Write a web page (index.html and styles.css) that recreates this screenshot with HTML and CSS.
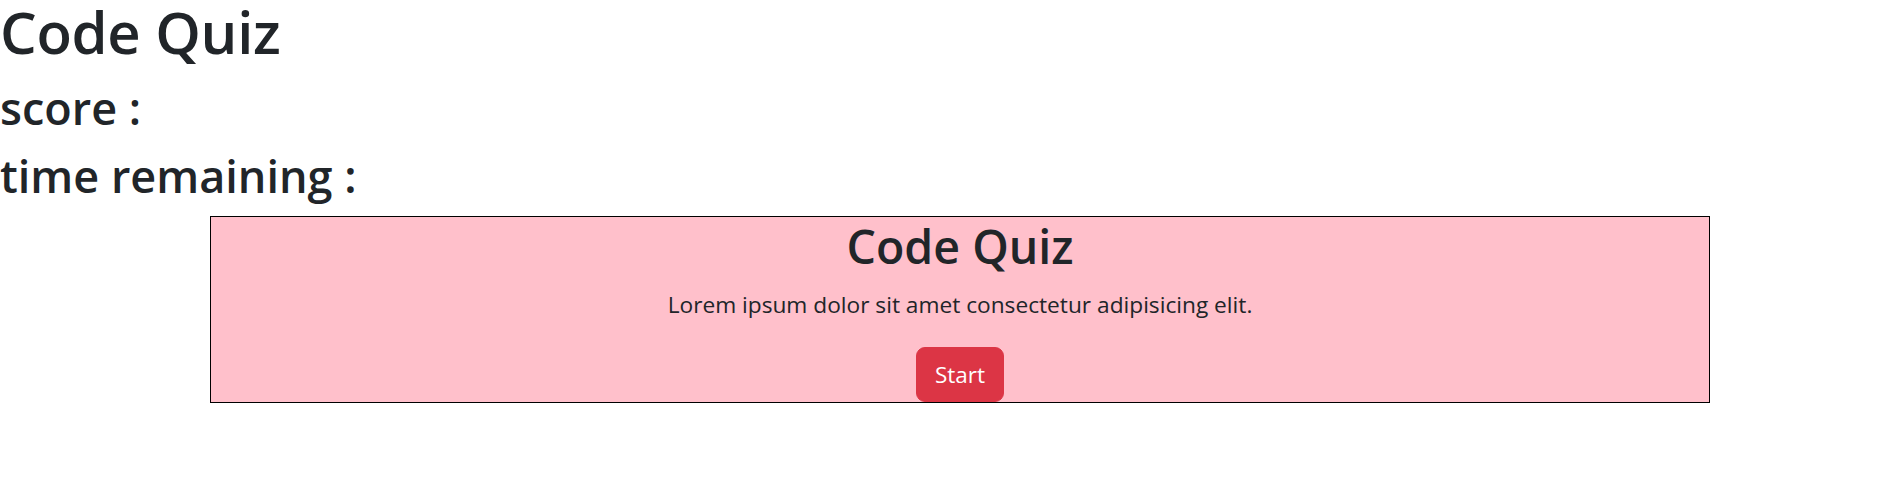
FILE: index.html
```html
<!DOCTYPE html>
<html lang="en">
<head>
<meta charset="utf-8">
<title>Code Quiz</title>
<link rel="stylesheet" href="styles.css">
</head>
<body>
<header class="top">
  <h1 class="title">Code Quiz</h1>
  <h2 class="stat">score :</h2>
  <h2 class="stat stat-last">time remaining :</h2>
</header>
<section class="quiz-box">
  <h2 class="quiz-title">Code Quiz</h2>
  <p class="quiz-text">Lorem ipsum dolor sit amet consectetur adipisicing elit.</p>
  <button class="btn-start" type="button">Start</button>
</section>
</body>
</html>
```

FILE: styles.css
```css
html, body {
  margin: 0;
  padding: 0;
  background: #ffffff;
}

body {
  font-family: "Open Sans", "Noto Sans", "DejaVu Sans", sans-serif;
  color: #212529;
}

.top {
  display: flex;
  flex-direction: column;
}

.title {
  margin: 0 0 10px 0;
  font-size: 58px;
  font-weight: 600;
  line-height: 64px;
  letter-spacing: -0.3px;
}

.stat {
  margin: 0;
  font-size: 45px;
  font-weight: 600;
  line-height: 68px;
}

.stat-last {
  margin-bottom: 6px;
}

.quiz-box {
  width: 1500px;
  margin-left: 210px;
  box-sizing: border-box;
  border: 1px solid #000;
  background: #ffc0cb;
  display: flex;
  flex-direction: column;
  align-items: center;
  padding: 1px 0 0 0;
  text-align: center;
}

.quiz-title {
  margin: 0 0 13px 0;
  font-size: 46.5px;
  font-weight: 600;
  line-height: 57px;
}

.quiz-text {
  margin: 0 0 25px 0;
  font-size: 22.7px;
  line-height: 34px;
}

.btn-start {
  font-family: "Open Sans", "Noto Sans", "DejaVu Sans", sans-serif;
  font-size: 22.5px;
  line-height: 35px;
  padding: 9px 18px;
  border: 1px solid #dc3545;
  border-radius: 9px;
  background: #dc3545;
  color: #ffffff;
  cursor: pointer;
}
```
